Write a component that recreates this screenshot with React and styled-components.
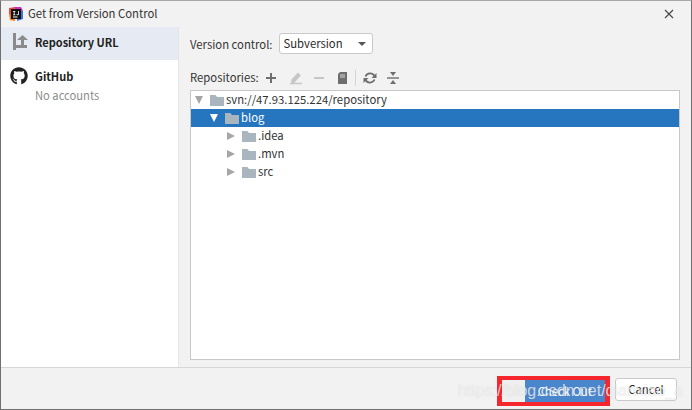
import styled, { createGlobalStyle } from 'styled-components';
import { FaGithub } from 'react-icons/fa';

const GlobalStyle = createGlobalStyle`
    html, body {
        margin: 0;
        padding: 0;
        background: #f2f2f2;
    }
    * {
        box-sizing: border-box;
    }
`

const Window = styled.div`
    position: relative;
    display: flex;
    flex-direction: column;
    width: 692px;
    height: 410px;
    overflow: hidden;
    border: 1px solid #707070;
    border-top-color: #a8a8a8;
    background-color: #f2f2f2;
    color: #2b2b2b;
    font-family: "Noto Sans CJK SC", "Noto Sans", sans-serif;
    font-size: 11.3px;
`

const TitleBar = styled.div`
    display: flex;
    align-items: center;
    height: 26px;
    padding: 0 17px 0 7px;
    background-color: #f2f2f2;
`

const TitleText = styled.span`
    flex: 1;
    margin: 0 0 2px 4px;
    color: #333;
`

const Body = styled.div`
    display: flex;
    flex: 1;
    min-height: 0;
`

const Sidebar = styled.div`
    width: 178px;
    background-color: #fff;
    border-right: 1px solid #e6e6e6;
`

const SideItem = styled.div`
    display: flex;
    height: ${p => p.$tall ? '52px' : '33px'};
    padding: ${p => p.$tall ? '7px 0 0 9px' : '6px 0 0 11px'};
    background-color: ${p => p.$active ? '#e6ebf3' : 'transparent'};
`

const SideText = styled.div`
    display: flex;
    flex-direction: column;
    margin: -1px 0 0 ${p => p.$shift || 0}px;
`

const SideLabel = styled.span`
    font-weight: 700;
    font-size: 11px;
    line-height: 20px;
    color: #222;
`

const SideHint = styled.span`
    font-size: 11.2px;
    line-height: 18px;
    color: #8c8c8c;
`

const Main = styled.div`
    display: flex;
    flex: 1;
    flex-direction: column;
    padding: 6px 11px 7px 11px;
`

const VcsRow = styled.div`
    display: flex;
    align-items: center;
    gap: 6px;
    height: 21px;
`

const Label = styled.span`
    margin-bottom: ${p => p.$lift ?? 0}px;
    color: #333;
`

const Combo = styled.div`
    display: flex;
    align-items: center;
    justify-content: space-between;
    width: 94px;
    height: 21px;
    padding: 0 6px 1px 4px;
    background-color: #fff;
    border: 1px solid #c9c9c9;
    border-radius: 3px;
`

const ComboArrow = styled.span`
    width: 0;
    height: 0;
    margin-top: 1px;
    border-left: 4px solid transparent;
    border-right: 4px solid transparent;
    border-top: 4px solid #555;
`

const ToolRow = styled.div`
    display: flex;
    align-items: center;
    height: 22px;
    margin-top: 13px;
`

const ToolLabel = styled(Label)`
    margin-right: 5px;
`

const ToolIcon = styled.svg`
    width: 14px;
    height: 14px;
    margin-right: ${p => p.$gap || 9}px;
    flex: none;
`

const ToolSep = styled.span`
    width: 1px;
    height: 16px;
    margin: 0 7px 0 0;
    background-color: #d4d4d4;
`

const Tree = styled.div`
    flex: 1;
    margin-top: 1px;
    background-color: #fff;
    border: 1px solid #c8c8c8;
`

const Row = styled.div`
    display: flex;
    align-items: center;
    height: 18px;
    padding-left: ${p => p.$indent}px;
    background-color: ${p => p.$selected ? '#2675bf' : 'transparent'};
    color: ${p => p.$selected ? '#fff' : '#333'};
`

const RowName = styled.span`
    margin-bottom: 2px;
`

const Arrow = styled.span`
    width: 0;
    height: 0;
    flex: none;
    ${p => p.$open ? `
        border-left: 4.5px solid transparent;
        border-right: 4.5px solid transparent;
        border-top: 8px solid ${p.$light ? '#fff' : '#a6a6a6'};
    ` : `
        border-top: 4.5px solid transparent;
        border-bottom: 4.5px solid transparent;
        border-left: 8px solid #a6a6a6;
    `}
`

const Folder = styled.svg`
    width: 14px;
    height: 12px;
    margin: 0 2px 0 7px;
    flex: none;
`

const Footer = styled.div`
    display: flex;
    align-items: flex-start;
    justify-content: flex-end;
    gap: 5px;
    height: 42px;
    padding: 8px 14px 0 0;
    border-top: 1px solid #d6d6d6;
`

const CheckOutButton = styled.div`
    display: flex;
    align-items: center;
    justify-content: flex-end;
    width: 113px;
    height: 30px;
    padding: 0 13px 1px 0;
    border: 5px solid #f5262c;
    border-width: 4px 5px;
    background: linear-gradient(90deg, #efefef 23px, #4a86cc 23px);
    color: #fff;
`

const CancelButton = styled.div`
    display: flex;
    align-items: center;
    justify-content: center;
    width: 62px;
    height: 23px;
    margin-top: 2px;
    padding-bottom: 1px;
    background-color: #fff;
    border: 1px solid #c9c9c9;
    border-radius: 3px;
    color: #222;
`

const Watermark = styled.span`
    position: absolute;
    right: 8px;
    bottom: 9px;
    font-family: "Liberation Sans", Arial, sans-serif;
    font-size: 16px;
    color: rgba(255, 255, 255, 0.7);
    text-shadow: 0 0 1px rgba(130, 130, 130, 0.35);
    white-space: nowrap;
`

const AppLogo = () => (
    <svg width="16" height="16" viewBox="0 0 16 16">
        <path d="M1 2 L7 1 L6 9 L1 8 Z" fill="#f0483e" />
        <path d="M6 1 L13 1 L15 5 L10 8 Z" fill="#c72fc0" />
        <path d="M10 5 L15 5 L15 13 L9 15 Z" fill="#3f6fe8" />
        <path d="M1 8 L6 8 L7 15 L2 14 Z" fill="#f97a12" />
        <path d="M3 3 H13 V13 H3 Z" fill="#111" />
        <path d="M5 10.5 H9.5 V11.5 H5 Z" fill="#fff" />
        <path d="M5 5 H7.4 V5.8 H6.6 V8.4 H7.4 V9.2 H5 V8.4 H5.8 V5.8 H5 Z M10 5 H10.8 V8.4 C10.8 9.4 9 9.4 8.4 8.8 L8.8 8.1 C9.2 8.5 10 8.6 10 8 Z" fill="#fff" />
    </svg>
)

const RepoIcon = () => (
    <svg width="17" height="18" viewBox="0 0 17 18">
        <path d="M1 0 H4 V12 H9 V7 H5 L10.5 2 L16 7 H12 V12 H15 V15 H4 V17 H1 Z" fill="#8b8b8b" />
    </svg>
)

const FolderIcon = ({ color = '#a9b5bf' }) => (
    <Folder viewBox="0 0 14 12">
        <path d="M0 1 H5.5 L7 3 H14 V12 H0 Z" fill={color} />
    </Folder>
)

const rows = [
    { name: 'svn://47.93.125.224/repository', indent: 4, open: true },
    { name: 'blog', indent: 19, open: true, selected: true },
    { name: '.idea', indent: 36 },
    { name: '.mvn', indent: 36 },
    { name: 'src', indent: 36 },
]

const App = () => {
    return (
        <Window>
            <GlobalStyle />
            <TitleBar>
                <AppLogo />
                <TitleText>Get from Version Control</TitleText>
                <svg width="10" height="10" viewBox="0 0 10 10">
                    <path d="M1 1 L9 9 M9 1 L1 9" stroke="#444" strokeWidth="1.1" />
                </svg>
            </TitleBar>
            <Body>
                <Sidebar>
                    <SideItem $active>
                        <RepoIcon />
                        <SideText $shift={6}>
                            <SideLabel>Repository URL</SideLabel>
                        </SideText>
                    </SideItem>
                    <SideItem $tall>
                        <FaGithub size={18} color="#222" />
                        <SideText $shift={7}>
                            <SideLabel>GitHub</SideLabel>
                            <SideHint>No accounts</SideHint>
                        </SideText>
                    </SideItem>
                </Sidebar>
                <Main>
                    <VcsRow>
                        <Label>Version control:</Label>
                        <Combo>
                            <span>Subversion</span>
                            <ComboArrow />
                        </Combo>
                    </VcsRow>
                    <ToolRow>
                        <ToolLabel $lift={2}>Repositories:</ToolLabel>
                        <ToolIcon viewBox="0 0 14 14" $gap={11}>
                            <path d="M7 2 V12 M2 7 H12" stroke="#6e6e6e" strokeWidth="2" />
                        </ToolIcon>
                        <ToolIcon viewBox="0 0 14 14">
                            <path d="M3 9 L9 2.5 L11 4.5 L5 11 H3 Z M1 12.5 H13" stroke="#c6c6c6" strokeWidth="1.3" fill="#c6c6c6" />
                        </ToolIcon>
                        <ToolIcon viewBox="0 0 14 14">
                            <path d="M2 7 H12" stroke="#c6c6c6" strokeWidth="2" />
                        </ToolIcon>
                        <ToolIcon viewBox="0 0 14 14" $gap={6}>
                            <path d="M5 1 H12 V13 H3 V3 Z" fill="#6e6e6e" />
                            <path d="M5 4 H10 M5 6 H10" stroke="#f2f2f2" strokeWidth="0.8" />
                        </ToolIcon>
                        <ToolSep />
                        <ToolIcon viewBox="0 0 14 14">
                            <path d="M11.5 5 A5 5 0 0 0 2.5 5.5 M2.5 9 A5 5 0 0 0 11.5 8.5" stroke="#6e6e6e" strokeWidth="1.8" fill="none" />
                            <path d="M13.5 2 V7 H8.5 Z M0.5 12 V7 H5.5 Z" fill="#6e6e6e" />
                        </ToolIcon>
                        <ToolIcon viewBox="0 0 14 14">
                            <path d="M1 7 H13" stroke="#6e6e6e" strokeWidth="1.4" />
                            <path d="M4 1 H10 L7 5 Z M4 13 H10 L7 9 Z" fill="#6e6e6e" />
                        </ToolIcon>
                    </ToolRow>
                    <Tree>
                        {rows.map(row => (
                            <Row key={row.name} $indent={row.indent} $selected={row.selected}>
                                <Arrow $open={row.open} $light={row.selected} />
                                <FolderIcon />
                                <RowName>{row.name}</RowName>
                            </Row>
                        ))}
                    </Tree>
                </Main>
            </Body>
            <Footer>
                <CheckOutButton>Check Out</CheckOutButton>
                <CancelButton>Cancel</CancelButton>
            </Footer>
            <Watermark>https://blog.csdn.net/qianxiao_a</Watermark>
        </Window>
    )
}

export default App;
